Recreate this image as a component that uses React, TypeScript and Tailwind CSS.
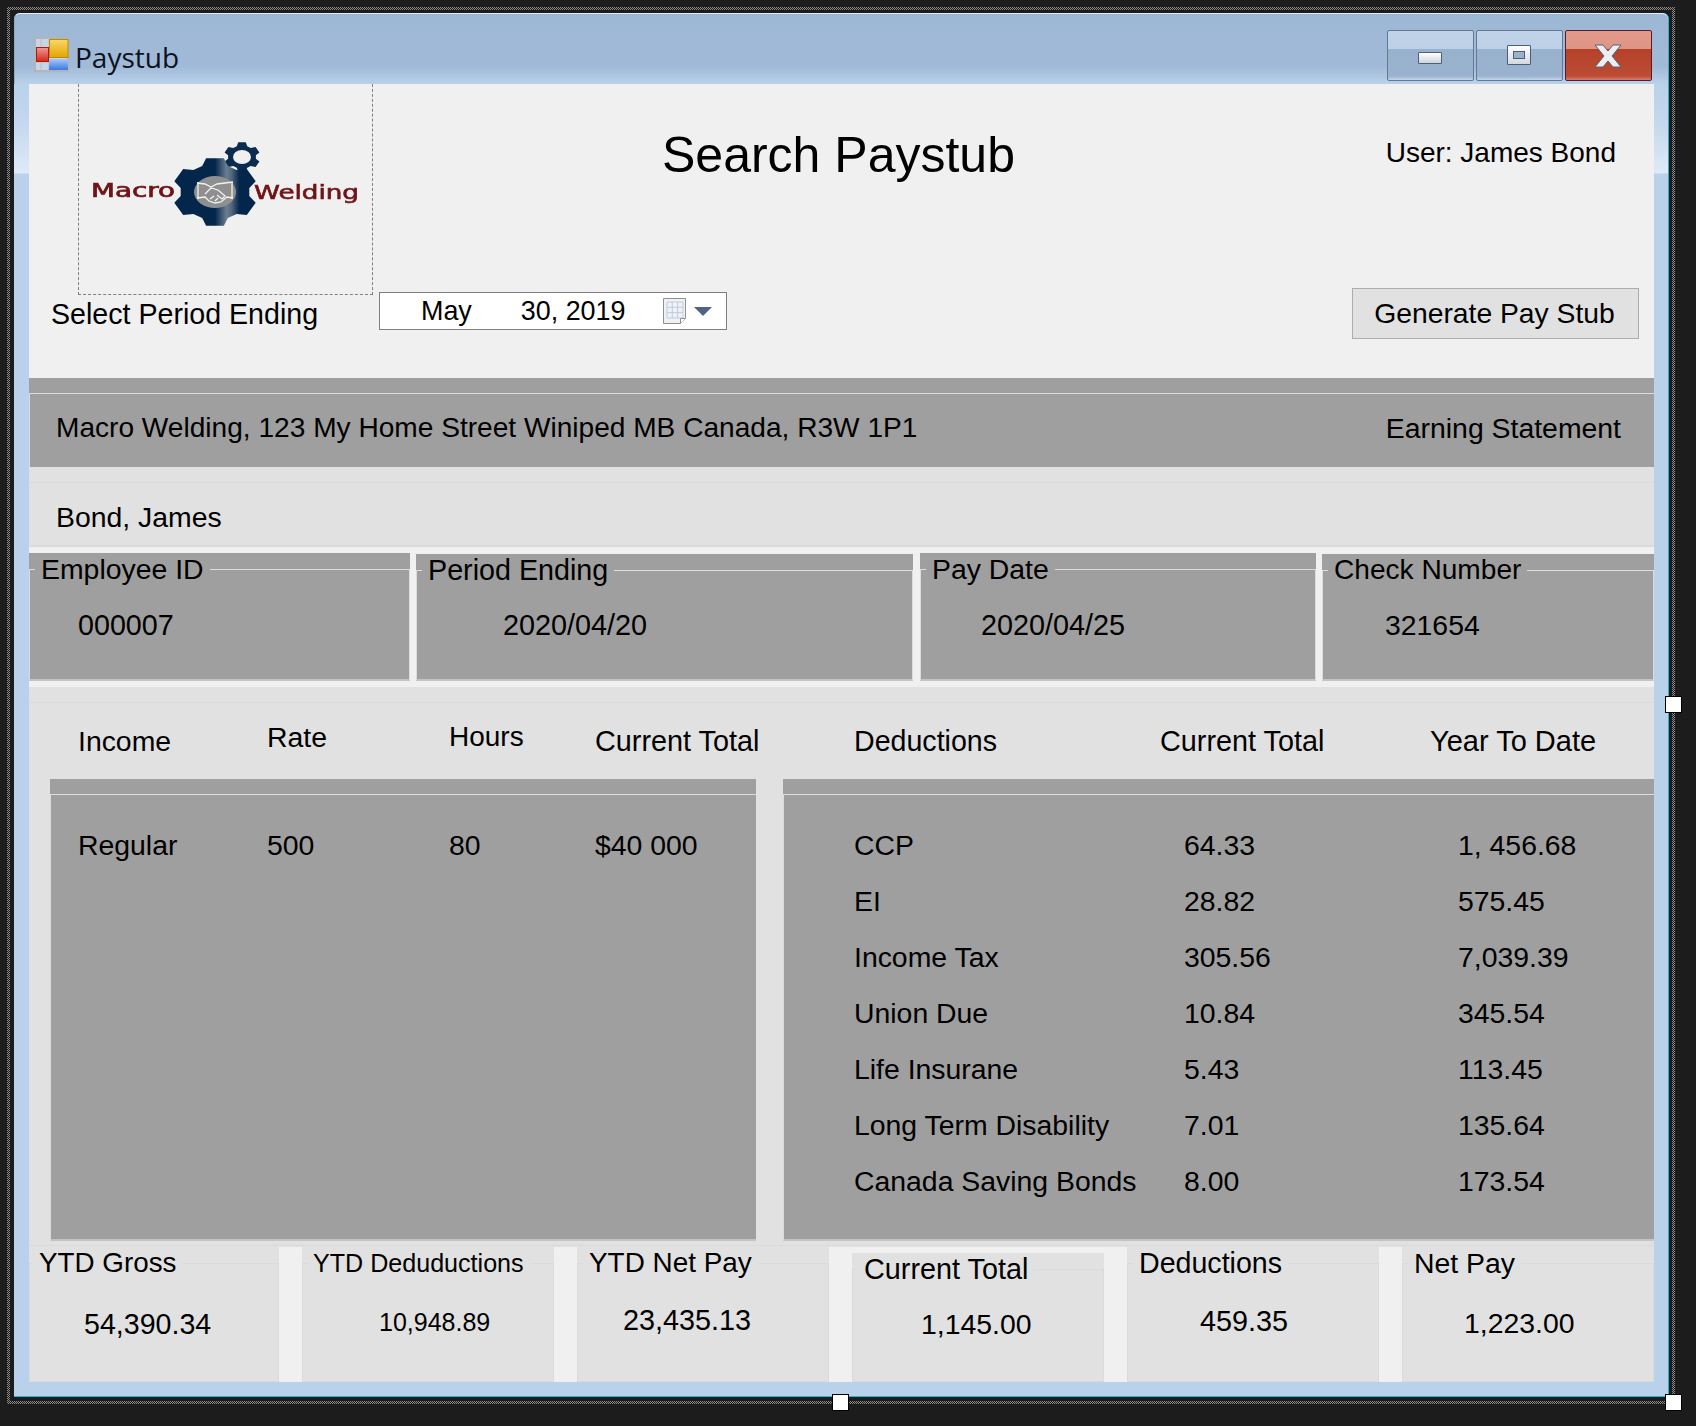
import React from "react";

const gearPoints = (cx: number, cy: number, rOut: number, rIn: number, teeth: number, sx: number, start: number) => {
  const pts: string[] = [];
  const step = (Math.PI * 2) / teeth;
  for (let i = 0; i < teeth; i++) {
    const a = start + i * step;
    const corners: [number, number][] = [
      [a - step * 0.36, rIn],
      [a - step * 0.2, rOut],
      [a + step * 0.2, rOut],
      [a + step * 0.36, rIn],
    ];
    corners.forEach(([t, r]) => {
      pts.push(`${(cx + Math.cos(t) * r * sx).toFixed(1)},${(cy + Math.sin(t) * r).toFixed(1)}`);
    });
  }
  return pts.join(" ");
};

const Logo = () => (
  <svg width="294" height="210" viewBox="78 84 294 210" className="blur-[0.4px]">
    <defs>
      <linearGradient id="gearFill" x1="0" x2="1" y1="0" y2="0">
        <stop offset="0" stopColor="#03264a" />
        <stop offset="0.5" stopColor="#03264a" />
        <stop offset="0.64" stopColor="#6b7d91" />
        <stop offset="0.7" stopColor="#55697f" />
        <stop offset="0.8" stopColor="#03264a" />
        <stop offset="1" stopColor="#03264a" />
      </linearGradient>
    </defs>
    <polygon points={gearPoints(242, 157, 15, 11.5, 6, 1.22, -Math.PI / 2)} fill="#0b2c4e" />
    <ellipse cx="242" cy="157" rx="9" ry="7" fill="#f0f0f0" />
    <polygon points={gearPoints(215, 192, 34.5, 28, 6, 1.24, -Math.PI / 2)} fill="url(#gearFill)" />
    <ellipse cx="215" cy="192" rx="21" ry="16" fill="#8f8f8f" />
    <g fill="none" stroke="#f2f2f2" strokeWidth="1.3">
      <path d="M197 183l8 1 6 3 6-3 8-1 8-1M197 198l8-1 4 4 6 2 6-1 6-5 6 1" />
      <path d="M198 182v17M232 182v17M205 194l6-6 7 2 7 6-3 3-5-4M210 199l4-3M215 201l3-3" />
    </g>
    <text x="91" y="197" textLength="84" lengthAdjust="spacingAndGlyphs" fill="#701418" stroke="#701418" strokeWidth="0.7" className="font-['DejaVu_Sans',sans-serif] text-[19px]">
      Macro
    </text>
    <text x="254" y="199" textLength="105" lengthAdjust="spacingAndGlyphs" fill="#701418" stroke="#701418" strokeWidth="0.6" className="font-['DejaVu_Sans',sans-serif] text-[19px]">
      Welding
    </text>
  </svg>
);

const AppIcon = () => (
  <svg width="35" height="35" viewBox="0 0 35 35" className="shrink-0">
    <rect x="1" y="1" width="33" height="33" fill="#c6d6e8" stroke="#b4b4b4" strokeWidth="2" />
    <path d="M1 11h14M1 25h14M7 1v33M15 1v33" stroke="#bcbcbc" />
    <defs>
      <linearGradient id="ay" x1="0" x2="0" y1="0" y2="1">
        <stop offset="0" stopColor="#f8d868" />
        <stop offset="1" stopColor="#e5a400" />
      </linearGradient>
      <linearGradient id="ar" x1="0" x2="0" y1="0" y2="1">
        <stop offset="0" stopColor="#ee9a92" />
        <stop offset="1" stopColor="#d8261c" />
      </linearGradient>
      <linearGradient id="ab" x1="0" x2="0" y1="0" y2="1">
        <stop offset="0" stopColor="#a8c8fa" />
        <stop offset="1" stopColor="#3b78e0" />
      </linearGradient>
    </defs>
    <rect x="15.5" y="2.5" width="18.5" height="18" fill="url(#ay)" stroke="#b88a10" />
    <rect x="2.5" y="10.5" width="12" height="14" fill="url(#ar)" stroke="#a81c14" />
    <rect x="15" y="22" width="19" height="11" fill="url(#ab)" />
  </svg>
);

const CalendarIcon = () => (
  <svg width="26" height="28" viewBox="0 0 26 28" className="shrink-0">
    <path d="M1.5 1.5h22v20l-5 5h-17z" fill="#eef1f6" stroke="#8f8f8f" />
    <path d="M5 5h16v16h-16zM5 10.3h16M5 15.6h16M10.3 5v16M15.6 5v16" fill="none" stroke="#c2ccdb" />
    <path d="M18.5 26.5v-5h5" fill="#fff" stroke="#8f8f8f" />
  </svg>
);

const CaptionButton = ({ close, children }: { close?: boolean; children: React.ReactNode }) => (
  <div
    className={
      close
        ? "flex h-[51px] w-[87px] items-center justify-center rounded-[2px] border border-[#5c1a26] bg-[linear-gradient(180deg,#e29a8a_0%,#de9585_36%,#b5412a_37%,#bc4c35_92%,#d8816e_100%)]"
        : "flex h-[51px] w-[87px] items-center justify-center rounded-[2px] border border-[#64788f] bg-[linear-gradient(180deg,#c0d3e8_0%,#bdd1e6_36%,#98b1cc_37%,#9ab2ce_92%,#c3d6ea_100%)]"
    }
  >
    {children}
  </div>
);

// group box with the legend cutting the top line, like a winforms GroupBox
const GroupBox = ({
  legend,
  outer,
  line,
  pad,
  legendClass = "text-[28.4px]",
  children,
}: {
  legend: string;
  outer: string;
  line: string;
  pad: string;
  legendClass?: string;
  children: React.ReactNode;
}) => (
  <div className={outer}>
    <fieldset className={"h-full min-w-0 border " + line + " " + pad}>
      <legend className={"whitespace-nowrap px-[6px] leading-[32px] " + legendClass}>{legend}</legend>
      {children}
    </fieldset>
  </div>
);

const deductions = [
  ["CCP", "64.33", "1, 456.68"],
  ["EI", "28.82", "575.45"],
  ["Income Tax", "305.56", "7,039.39"],
  ["Union Due", "10.84", "345.54"],
  ["Life Insurane", "5.43", "113.45"],
  ["Long Term Disability", "7.01", "135.64"],
  ["Canada Saving Bonds", "8.00", "173.54"],
];

export default function App() {
  return (
    <div className="h-[1426px] w-[1696px] overflow-hidden bg-[#1c1c1c] pl-[7px] pt-[7px] font-['Liberation_Sans',Arial,sans-serif] text-[28.4px] leading-[32px] text-black">
      <div className="relative h-[1397px] w-[1668px] bg-[repeating-conic-gradient(#8a8a8a_0_25%,#1c1c1c_0_50%)] bg-[length:2px_2px] p-[3px]">
        <div className="h-full w-full bg-[#1c1c1c] pl-[4px] pt-[3px]">
          <div className="flex h-[1384px] w-[1655px] flex-col rounded-t-[6px] border-r border-b border-r-[#27b4d6] border-b-[#27b4d6] bg-[#b9d1ea]">
            {/* title bar */}
            <div className="flex h-[71px] shrink-0 items-start rounded-t-[6px] border-t border-l border-t-[#e8eef5] border-l-[#8fa9c6] bg-[linear-gradient(180deg,#9cb7d4_0%,#a1bad7_75%,#b9d1ea_100%)] pl-[19px]">
              <div className="mt-[23px]">
                <AppIcon />
              </div>
              <span className="ml-[6px] mt-[23px] font-['Open_Sans',sans-serif] text-[28px] leading-[40px] text-[#0b1220]">Paystub</span>
              <div className="ml-auto mr-[16px] mt-[16px] flex gap-[2px]">
                <CaptionButton>
                  <span className="mr-[2px] mt-[5px] block h-[12px] w-[24px] rounded-[1px] border border-[#4d5f78] bg-[linear-gradient(180deg,#fff,#cfd4da)]"></span>
                </CaptionButton>
                <CaptionButton>
                  <span className="mb-[2px] mr-[2px] flex h-[20px] w-[24px] items-center justify-center rounded-[1px] border border-[#4d5f78] bg-[linear-gradient(180deg,#fff,#d5d9de)]">
                    <span className="block h-[8px] w-[12px] border border-[#4d5f78] bg-[#9ab2ce]"></span>
                  </span>
                </CaptionButton>
                <CaptionButton close>
                  <svg width="28" height="24" viewBox="0 0 28 24" className="mr-[2px]">
                    <path d="M1 1h8l5 6 5-6h8l-9 11 9 11h-8l-5-6-5 6h-8l9-11z" fill="#eceef0" stroke="#55607a" />
                  </svg>
                </CaptionButton>
              </div>
            </div>

            <div className="flex h-[1298px] shrink-0">
              <div className="w-[15px] shrink-0 bg-[linear-gradient(180deg,#b9d1ea_0px,#c4d8ee_40px,#dfeaf7_89px,#b9d1ea_90px)]"></div>

              {/* client area */}
              <div className="flex w-[1625px] shrink-0 flex-col bg-[#f0f0f0]">
                <div className="h-[294px] shrink-0">
                  <div className="flex h-[208px]">
                    <div className="ml-[49px] h-[211px] w-[295px] shrink-0 border-x border-b border-dashed border-[#808080]">
                      <div className="-mx-px">
                        <Logo />
                      </div>
                    </div>
                    <div className="ml-[289px] mt-[43px] text-[50px] leading-[56px]">Search Paystub</div>
                    <div className="ml-auto mr-[38px] mt-[53px] whitespace-nowrap text-[28px]">User: James Bond</div>
                  </div>
                  <div className="flex items-start">
                    <div className="ml-[22px] mt-[6px] w-[328px] whitespace-nowrap text-[28.6px]">Select Period Ending</div>
                    <div className="flex h-[38px] w-[348px] items-center border border-[#7f7f7f] bg-white pl-[41px] text-[26.9px]">
                      <span>May</span>
                      <span className="ml-[49px]">30, 2019</span>
                      <span className="ml-[36px]">
                        <CalendarIcon />
                      </span>
                      <span className="ml-[6px] h-0 w-0 border-x-[9px] border-t-[9px] border-x-transparent border-t-[#4f6484]"></span>
                    </div>
                    <div className="-mt-[4px] ml-[625px] flex h-[51px] w-[287px] items-center justify-center border border-[#adadad] bg-[#e1e1e1] pb-[2px] pr-[2px] text-[28.3px]">
                      Generate Pay Stub
                    </div>
                  </div>
                </div>

                {/* company band */}
                <div className="h-[89px] shrink-0 bg-[#9f9f9f] pt-[15px]">
                  <div className="flex h-[74px] items-center justify-between border-t border-l border-[#dcdcdc] pb-[6px] pl-[26px] pr-[33px]">
                    <span className="text-[28.1px]">Macro Welding, 123 My Home Street Winiped MB Canada, R3W 1P1</span>
                    <span>Earning Statement</span>
                  </div>
                </div>

                {/* employee name */}
                <div className="h-[80px] shrink-0 bg-[#e1e1e1] pt-[15px]">
                  <div className="h-[65px] border-t border-b-2 border-[#dadada] pl-[27px] pt-[18px]">Bond, James</div>
                </div>

                {/* id cards */}
                <div className="flex h-[140px] shrink-0 gap-[6px] pt-[6px]">
                  <GroupBox legend="Employee ID" outer="h-[128px] w-[381px] shrink-0 bg-[#9f9f9f]" line="border-[#dcdcdc] border-b-2 border-b-[#c4c4c4]" pad="pl-[5px]">
                    <div className="ml-[43px] mt-[24px] text-[28.7px]">000007</div>
                  </GroupBox>
                  <GroupBox legend="Period Ending" legendClass="text-[28.7px]" outer="mt-[1px] h-[127px] w-[497px] shrink-0 bg-[#9f9f9f]" line="border-[#dcdcdc] border-b-2 border-b-[#c4c4c4]" pad="pl-[5px]">
                    <div className="ml-[81px] mt-[23px] text-[28.8px]">2020/04/20</div>
                  </GroupBox>
                  <GroupBox legend="Pay Date" outer="ml-[1px] h-[128px] w-[396px] shrink-0 bg-[#9f9f9f]" line="border-[#dcdcdc] border-b-2 border-b-[#c4c4c4]" pad="pl-[5px]">
                    <div className="ml-[55px] mt-[24px] text-[28.8px]">2020/04/25</div>
                  </GroupBox>
                  <GroupBox legend="Check Number" legendClass="text-[28.1px]" outer="mt-[1px] h-[127px] w-[332px] shrink-0 bg-[#9f9f9f]" line="border-[#dcdcdc] border-b-2 border-b-[#c4c4c4]" pad="pl-[5px]">
                    <div className="ml-[57px] mt-[23px]">321654</div>
                  </GroupBox>
                </div>

                {/* income / deductions */}
                <div className="h-[560px] shrink-0 bg-[#e1e1e1] pt-[15px]">
                  <div className="h-[545px] border-t border-[#dadada]">
                    <div className="grid h-[76px] grid-cols-[189px_182px_146px_259px_306px_270px_1fr] pl-[49px] pt-[22px]">
                      <span>Income</span>
                      <span className="-mt-[4px]">Rate</span>
                      <span className="-mt-[4px] text-[28px]">Hours</span>
                      <span className="text-[28.8px]">Current Total</span>
                      <span className="text-[28.6px]">Deductions</span>
                      <span className="text-[28.8px]">Current Total</span>
                      <span className="text-[29px]">Year To Date</span>
                    </div>
                    <div className="flex h-[462px] gap-[27px] pl-[21px]">
                      <div className="h-full w-[706px] shrink-0 bg-[#9f9f9f] pt-[15px]">
                        <div className="grid h-[447px] grid-cols-[189px_182px_146px_1fr] content-start border-t border-b-2 border-l border-[#dcdcdc] border-b-[#c4c4c4] pl-[27px] pt-[22px] leading-[56px]">
                          <span>Regular</span>
                          <span>500</span>
                          <span>80</span>
                          <span>$40 000</span>
                        </div>
                      </div>
                      <div className="h-full flex-1 bg-[#9f9f9f] pt-[15px]">
                        <div className="grid h-[447px] grid-cols-[330px_274px_1fr] content-start border-t border-b-2 border-l border-[#dcdcdc] border-b-[#c4c4c4] pl-[70px] pt-[22px] leading-[56px]">
                          {deductions.map((row) => (
                            <React.Fragment key={row[0]}>
                              <span>{row[0]}</span>
                              <span>{row[1]}</span>
                              <span>{row[2]}</span>
                            </React.Fragment>
                          ))}
                        </div>
                      </div>
                    </div>
                    <div className="mt-[4px] border-t border-[#dadada]"></div>
                  </div>
                </div>

                {/* totals */}
                <div className="flex h-[135px] shrink-0 gap-[23px]">
                  <GroupBox legend="YTD Gross" legendClass="text-[27.8px]" outer="w-[250px] shrink-0 bg-[#e1e1e1]" line="border-[#dadada]" pad="pl-[3px]">
                    <div className="ml-[51px] mt-[29px] text-[28.6px]">54,390.34</div>
                  </GroupBox>
                  <GroupBox legend="YTD Deduductions" outer="w-[252px] shrink-0 bg-[#e1e1e1]" line="border-[#dadada]" pad="pl-[4px]" legendClass="text-[25.1px]">
                    <div className="ml-[72px] mt-[27px] text-[25px]">10,948.89</div>
                  </GroupBox>
                  <GroupBox legend="YTD Net Pay" legendClass="text-[27.9px]" outer="w-[252px] shrink-0 bg-[#e1e1e1]" line="border-[#dadada]" pad="pl-[5px]">
                    <div className="ml-[40px] mt-[25px] text-[28.8px]">23,435.13</div>
                  </GroupBox>
                  <div className="w-[252px] shrink-0 pt-[6px]">
                    <GroupBox legend="Current Total" legendClass="text-[28.8px]" outer="h-[129px] bg-[#e1e1e1]" line="border-[#dadada]" pad="pl-[5px]">
                      <div className="ml-[63px] mt-[23px]">1,145.00</div>
                    </GroupBox>
                  </div>
                  <GroupBox legend="Deductions" legendClass="text-[28.6px]" outer="w-[252px] shrink-0 bg-[#e1e1e1]" line="border-[#dadada]" pad="pl-[5px]">
                    <div className="ml-[67px] mt-[26px] text-[28.8px]">459.35</div>
                  </GroupBox>
                  <GroupBox legend="Net Pay" outer="w-[252px] shrink-0 bg-[#e1e1e1]" line="border-[#dadada]" pad="pl-[5px]">
                    <div className="ml-[56px] mt-[28px]">1,223.00</div>
                  </GroupBox>
                </div>
              </div>

              <div className="w-[14px] shrink-0 bg-[linear-gradient(180deg,#b9d1ea_0px,#c4d8ee_40px,#dfeaf7_89px,#b9d1ea_90px)]"></div>
            </div>
            <div className="h-[14px] shrink-0"></div>
          </div>
        </div>

        {/* designer resize handles */}
        <span className="absolute bottom-[-7px] left-[825px] h-[17px] w-[17px] border border-black bg-white"></span>
        <span className="absolute right-[-7px] top-[689px] h-[17px] w-[17px] border border-black bg-white"></span>
        <span className="absolute bottom-[-7px] right-[-7px] h-[17px] w-[17px] border border-black bg-white"></span>
      </div>
    </div>
  );
}
